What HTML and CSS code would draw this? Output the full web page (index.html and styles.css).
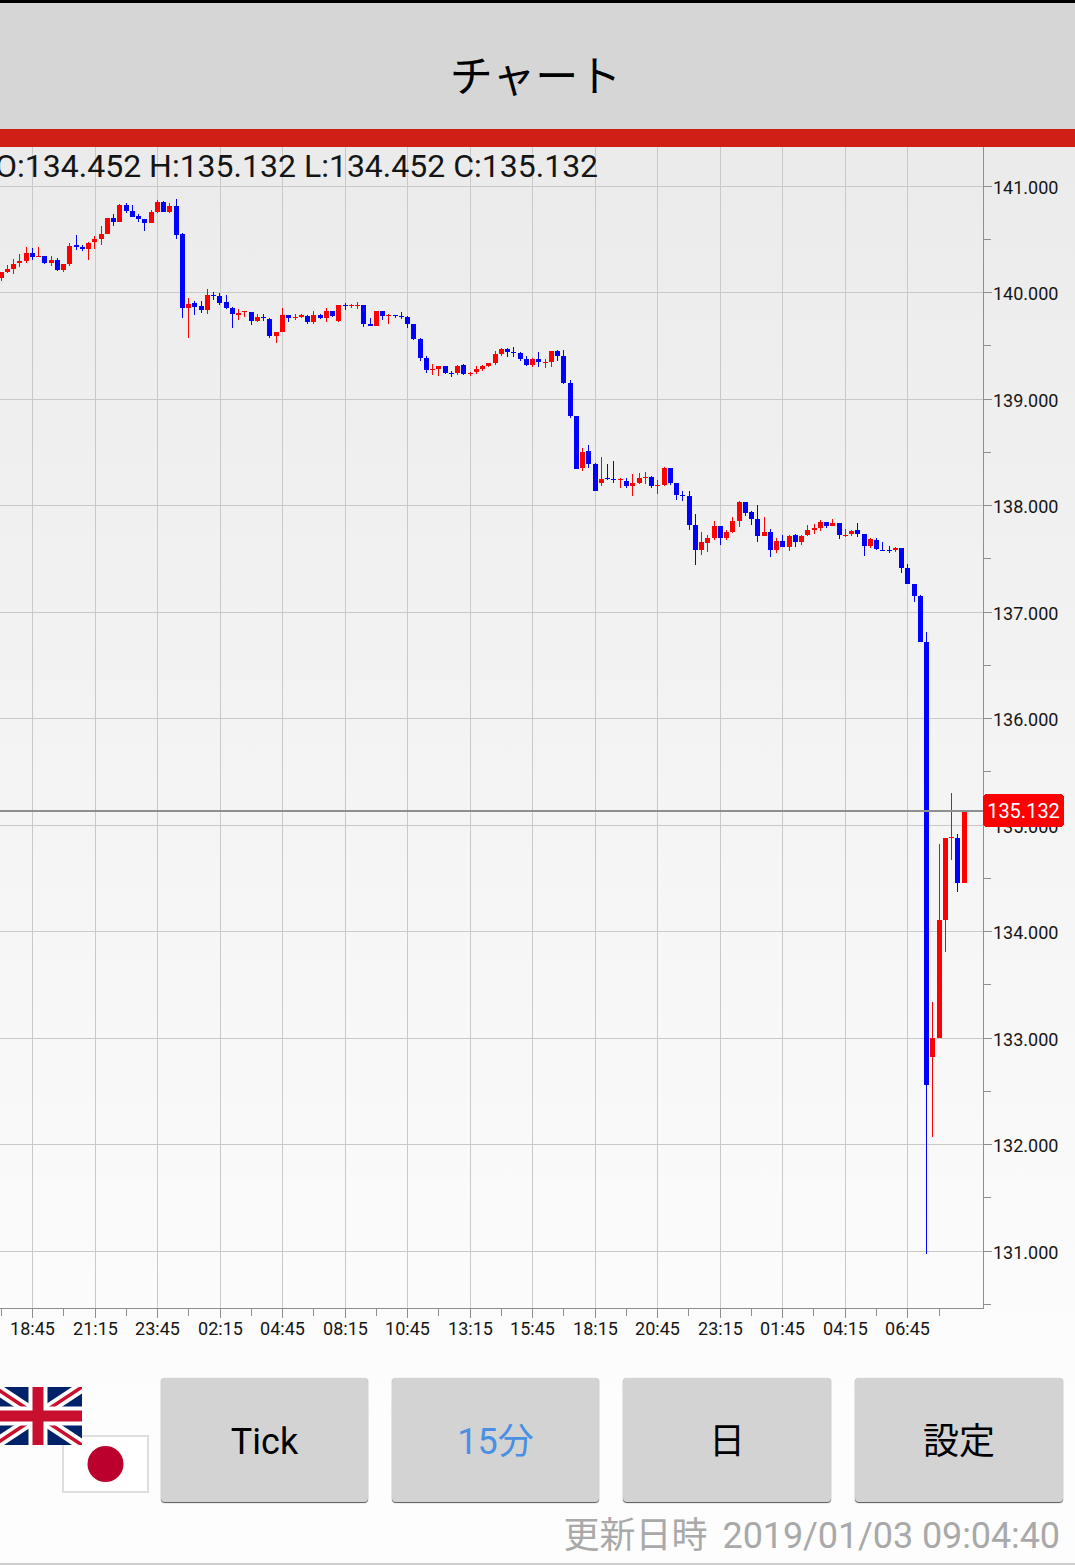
FILE: index.html
```html
<!DOCTYPE html>
<html lang="ja">
<head>
    <meta charset="UTF-8">
    <title>チャート</title>
    <link rel="stylesheet" href="styles.css">
</head>
<body>
<div class="wall">
    <div class="title-bar">チャート</div>
    <div class="red-bar"></div>
    <div class="chart-box">
        <svg id="chart" class="chart" viewBox="0 147 1075 1213" xmlns="http://www.w3.org/2000/svg"></svg>
        <div class="ohlc">O:134.452 H:135.132 L:134.452 C:135.132</div>
    </div>
    <div class="controls">
        <div class="flags">
            <svg class="flag-jp" viewBox="0 0 87 58" xmlns="http://www.w3.org/2000/svg">
                <rect x="1" y="1" width="85" height="56" fill="#fff" stroke="#dedede" stroke-width="2"/>
                <circle cx="43.5" cy="29" r="18" fill="#bc002d"/>
            </svg>
            <svg class="flag-uk" viewBox="0 0 88 58" xmlns="http://www.w3.org/2000/svg">
                <rect width="88" height="58" fill="#012169"/>
                <path d="M0 0L88 58M88 0L0 58" stroke="#fff" stroke-width="11"/>
                <path d="M0 0L44 29M88 58L44 29M88 0L44 29M0 58L44 29" stroke="#c8102e" stroke-width="3.5"/>
                <path d="M44 0V58M0 29H88" stroke="#fff" stroke-width="19"/>
                <path d="M44 0V58M0 29H88" stroke="#c8102e" stroke-width="11"/>
            </svg>
        </div>
        <div class="butts">
            <div class="butt">Tick</div>
            <div class="butt butt-on">15分</div>
            <div class="butt">日</div>
            <div class="butt">設定</div>
        </div>
    </div>
    <div class="stamp"><span class="stamp-label">更新日時</span> <span class="stamp-time">2019/01/03 09:04:40</span></div>
</div>
<script src="chart.js"></script>
</body>
</html>
```

FILE: styles.css
```css
html, body, .wall {
    width: 100%;
    height: 100%;
    margin: 0;
    border: 0;
    padding: 0;
}

html, body {
    overflow: hidden;
}

.wall {
    display: flex;
    flex-direction: column;
    box-sizing: border-box;
    border-bottom: 2px solid #cccccc;
    background: linear-gradient(#ebebeb 147px, #fdfdfd 1420px);
    font-family: Roboto, "Noto Sans CJK JP", sans-serif;
}

.title-bar {
    height: 126px;
    padding-right: 4px;
    border-top: 3px solid #000;
    background-color: #d6d6d6;
    color: #000;
    font-size: 43px;
    line-height: 149px;
    text-align: center;
    overflow: hidden;
}

.red-bar {
    height: 18px;
    background-color: #d01f14;
}

.chart-box {
    position: relative;
    height: 1213px;
}

.chart {
    display: block;
    width: 1075px;
    height: 1213px;
    shape-rendering: crispEdges;
}

.chart text {
    font-family: Roboto, sans-serif;
    font-size: 18px;
    fill: #151515;
}

.chart .price-tag-text {
    font-size: 20px;
    fill: #fff;
}

.ohlc {
    position: absolute;
    top: 0;
    left: -5px;
    color: #151515;
    font-size: 32px;
    line-height: 38px;
    white-space: nowrap;
}

.controls {
    display: flex;
    padding-top: 18px;
}

.flags {
    position: relative;
    flex: 0 0 161px;
    height: 125px;
}

.flag-uk {
    position: absolute;
    top: 9px;
    left: -6px;
    width: 88px;
    height: 58px;
}

.flag-jp {
    position: absolute;
    top: 57px;
    left: 62px;
    width: 87px;
    height: 58px;
}

.butts {
    display: grid;
    grid-template-columns: 207px 207px 208px 208px;
    gap: 24px;
}

.butt {
    height: 124px;
    border-radius: 4px;
    background-color: #d3d3d3;
    box-shadow: 0 1px 1px #555, 0 0 1px #bbb;
    color: #000;
    font-size: 36px;
    line-height: 129px;
    text-align: center;
}

.butt-on {
    color: #4a90e2;
}

.stamp {
    padding: 13px 15px 0 0;
    color: #a9a9a9;
    font-size: 36px;
    line-height: 40px;
    text-align: right;
}

.stamp-label {
    margin-right: 6px;
}

.stamp-time {
    letter-spacing: -0.1px;
}
```

FILE: chart.js
```js
var svgNs = "http://www.w3.org/2000/svg";
var chart = document.getElementById("chart");

var UP = "#ff0000";
var DOWN = "#0000ff";
var GRID = "#c9c9c9";
var AXIS = "#8f8f8f";

var axisX = 983;
var axisY = 1308;
var candleStep = 6.2545;
var firstCandleX = 1.05;

// read off the chart in thirds of a pixel, each block from its own top
// [wick top, body top, body bottom, wick bottom, colour]
var blocks = [
    { top: 140, rows: [
        [397, 397, 414, 422, UP], [376, 387, 397, 400, UP], [357, 372, 387, 402, UP], [342, 363, 369, 380, UP],
        [322, 339, 363, 369, UP], [324, 339, 351, 360, DOWN], [321, 349, 351, 351, UP], [348, 348, 369, 372, DOWN],
        [348, 360, 369, 378, UP], [354, 360, 390, 393, DOWN], [372, 372, 390, 396, UP], [309, 318, 372, 378, UP],
        [285, 315, 321, 330, DOWN], [315, 321, 327, 333, DOWN], [306, 309, 327, 360, UP], [288, 297, 306, 327, UP],
        [258, 282, 297, 315, UP], [234, 234, 282, 282, UP], [222, 234, 246, 258, DOWN], [192, 195, 246, 246, UP],
        [189, 195, 213, 219, DOWN], [195, 213, 231, 231, DOWN], [222, 228, 237, 246, DOWN], [237, 237, 249, 273, DOWN],
        [210, 216, 249, 249, UP], [180, 186, 216, 219, UP], [183, 186, 216, 216, DOWN], [189, 198, 216, 219, UP],
        [177, 198, 285, 297, DOWN], [279, 282, 504, 534, DOWN], [474, 492, 504, 594, UP], [483, 489, 501, 525, DOWN],
        [483, 498, 510, 519, DOWN], [447, 465, 510, 522, UP], [456, 465, 468, 480, DOWN], [459, 468, 489, 495, DOWN],
        [465, 486, 504, 507, DOWN], [501, 504, 522, 564, DOWN], [507, 519, 525, 540, UP], [513, 513, 516, 531, UP],
        [516, 516, 543, 555, DOWN], [522, 531, 543, 546, UP], [522, 531, 534, 543, DOWN], [534, 537, 588, 594, DOWN],
        [576, 576, 588, 609, UP], [504, 525, 576, 576, UP], [525, 525, 534, 546, DOWN], [522, 531, 534, 540, UP],
        [522, 525, 531, 534, UP], [525, 528, 546, 552, DOWN], [513, 525, 546, 552, UP], [522, 525, 534, 537, DOWN],
        [504, 513, 534, 546, UP], [513, 513, 528, 531, DOWN], [495, 495, 543, 546, UP], [489, 495, 498, 510, DOWN],
        [492, 495, 498, 504, UP], [486, 495, 498, 507, UP]
    ] },
    { top: 290, rows: [
        [45, 45, 102, 111, DOWN], [84, 102, 108, 108, DOWN], [63, 63, 108, 108, UP], [63, 63, 78, 90, DOWN],
        [72, 75, 78, 102, UP], [75, 75, 78, 84, DOWN], [66, 78, 81, 87, DOWN], [78, 81, 102, 114, DOWN],
        [102, 102, 147, 150, DOWN], [144, 147, 204, 213, DOWN], [198, 204, 240, 249, DOWN], [222, 237, 240, 255, UP],
        [228, 228, 237, 258, UP], [228, 228, 249, 252, DOWN], [243, 249, 252, 261, DOWN], [225, 228, 249, 255, UP],
        [222, 225, 252, 255, DOWN], [246, 249, 252, 258, UP], [228, 237, 246, 252, UP], [225, 228, 237, 243, UP],
        [219, 219, 228, 231, UP], [183, 192, 219, 225, UP], [174, 177, 192, 198, UP], [174, 177, 186, 201, DOWN],
        [171, 186, 189, 201, DOWN], [186, 189, 207, 213, DOWN], [198, 207, 225, 228, DOWN], [204, 207, 225, 231, UP],
        [186, 207, 216, 231, DOWN], [207, 216, 219, 234, UP], [183, 183, 216, 231, UP], [180, 183, 198, 213, DOWN],
        [180, 198, 279, 282, DOWN], [270, 279, 378, 384, DOWN], [378, 378, 537, 537, DOWN], [474, 486, 534, 543, UP],
        [465, 483, 522, 534, DOWN], [519, 522, 603, 603, DOWN], [501, 567, 579, 588, UP], [522, 564, 567, 570, DOWN],
        [513, 567, 570, 579, DOWN], [564, 567, 570, 594, UP], [564, 573, 588, 594, DOWN], [552, 579, 588, 618, UP],
        [549, 564, 579, 582, UP], [546, 561, 564, 582, UP], [558, 561, 588, 594, DOWN], [570, 585, 588, 612, UP],
        [531, 534, 585, 588, UP], [534, 534, 579, 585, DOWN], [579, 579, 615, 630, DOWN], [603, 615, 618, 633, DOWN]
    ] },
    { top: 450, rows: [
        [123, 138, 225, 240, DOWN], [192, 225, 300, 345, DOWN], [246, 276, 300, 315, UP], [255, 264, 279, 306, UP],
        [213, 228, 264, 270, UP], [228, 228, 264, 285, DOWN], [240, 246, 264, 270, UP], [201, 213, 246, 249, UP],
        [153, 156, 213, 231, UP], [156, 156, 189, 198, DOWN], [183, 186, 207, 225, DOWN], [165, 207, 258, 276, DOWN],
        [201, 246, 258, 258, UP], [237, 246, 300, 321, DOWN], [264, 273, 300, 309, UP], [255, 273, 291, 291, DOWN],
        [255, 258, 291, 303, UP], [252, 255, 276, 291, DOWN], [255, 258, 276, 285, UP], [225, 240, 255, 258, UP],
        [222, 234, 240, 252, UP], [210, 216, 234, 243, UP], [216, 216, 228, 234, DOWN], [207, 219, 228, 228, UP],
        [219, 219, 255, 267, DOWN], [237, 255, 258, 261, UP], [240, 243, 252, 258, UP], [219, 240, 252, 261, DOWN],
        [252, 252, 288, 318, DOWN], [264, 267, 288, 294, UP], [264, 270, 297, 300, DOWN], [276, 300, 303, 303, DOWN],
        [288, 300, 303, 309, DOWN], [291, 294, 300, 306, UP], [294, 294, 354, 369, DOWN], [342, 354, 402, 402, DOWN],
        [402, 402, 438, 456, DOWN], [435, 438, 576, 576, DOWN]
    ] },
    { top: 0, rows: [
        [1896, 1926, 3255, 3762, DOWN], [3006, 3114, 3170, 3410, UP], [2532, 2760, 3114, 3114, UP],
        [2514, 2514, 2760, 2856, UP], [2379, 2511, 2514, 2580, UP], [2502, 2514, 2649, 2676, DOWN],
        [2436, 2436, 2649, 2649, UP]
    ] }
];

function add(tag, attrs, text) {
    var el = document.createElementNS(svgNs, tag);
    for (var key in attrs) {
        el.setAttribute(key, attrs[key]);
    }
    if (text) {
        el.textContent = text;
    }
    chart.appendChild(el);
    return el;
}

function box(x, y, w, h, fill) {
    add("rect", { x: x, y: y, width: w, height: h, fill: fill });
}

function drawGrid() {
    var times = ["18:45", "21:15", "23:45", "02:15", "04:45", "08:15", "10:45", "13:15",
        "15:45", "18:15", "20:45", "23:15", "01:45", "04:15", "06:45"];
    var i, x, y;
    for (i = 0; i < 11; i++) {
        y = Math.floor(186.3 + 106.5 * i);
        box(0, y, axisX, 1, GRID);
        add("text", { x: 993, y: y + 8 }, (141 - i) + ".000");
        box(axisX, y, 9, 1, AXIS);
        box(axisX, y + 53, 8, 1, AXIS);
    }
    for (i = 0; i < times.length; i++) {
        x = Math.round(32.3 + 62.5 * i);
        box(x, 147, 1, axisY - 147, GRID);
        box(x, axisY, 1, 10, AXIS);
        box(Math.floor(1.3 + 62.5 * i), axisY, 1, 8, AXIS);
        add("text", { x: x + 0.5, y: 1335, "text-anchor": "middle" }, times[i]);
    }
    box(939, axisY, 1, 8, AXIS);
    box(axisX, 147, 1, axisY - 146, AXIS);
    box(0, axisY, axisX, 1, AXIS);
}

function drawCandles() {
    var n = 0;
    for (var b = 0; b < blocks.length; b++) {
        for (var r = 0; r < blocks[b].rows.length; r++) {
            var row = blocks[b].rows[r];
            var top = blocks[b].top;
            var left = Math.round(firstCandleX + candleStep * n - 2.5);
            box(left + 2, top + row[0] / 3, 1, (row[3] - row[0]) / 3, row[4]);
            box(left, top + row[1] / 3, 5, (row[2] - row[1]) / 3, row[4]);
            n++;
        }
    }
}

function drawPriceLine() {
    box(0, 810, axisX, 2, AXIS);
    add("rect", { x: 983, y: 794, width: 81, height: 33, rx: 4, fill: "#ff0000" });
    add("text", { x: 1023.5, y: 818, "text-anchor": "middle", "class": "price-tag-text" }, "135.132");
}

drawGrid();
drawCandles();
drawPriceLine();
```
